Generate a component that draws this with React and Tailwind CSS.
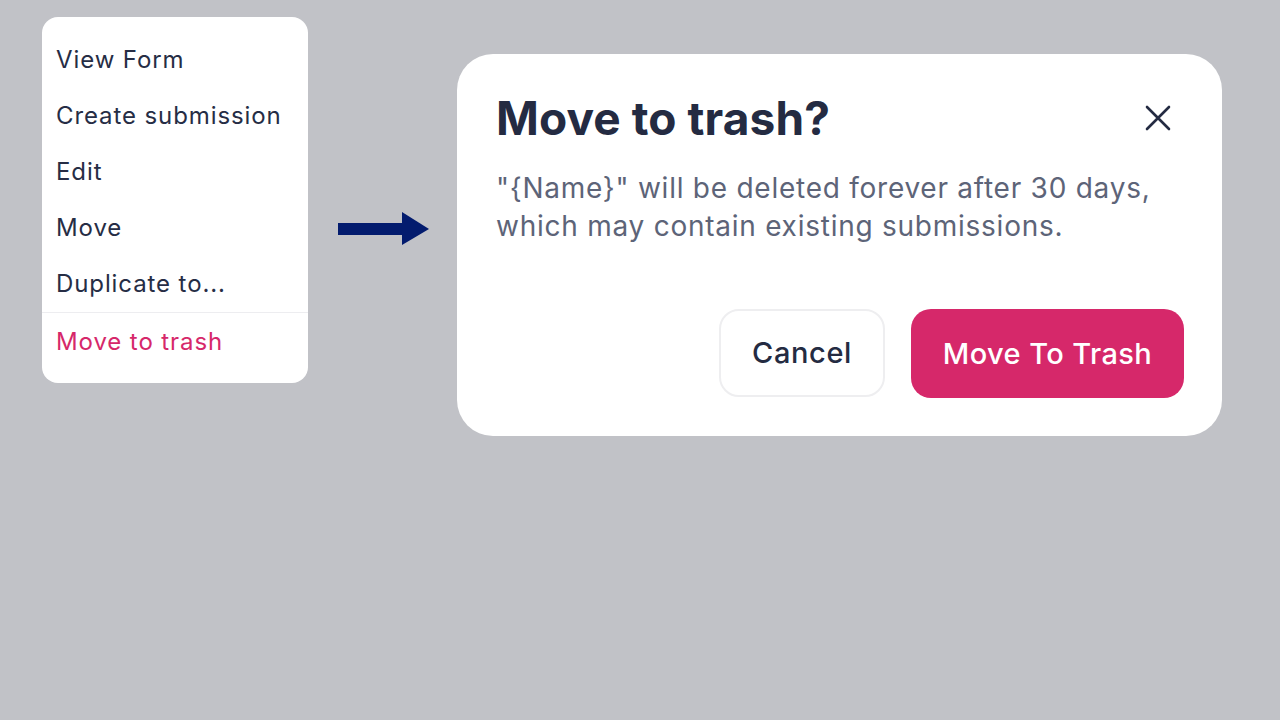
const menuItems = ['View Form', 'Create submission', 'Edit', 'Move', 'Duplicate to...'];

const ArrowRight = () => (
  <svg width="92" height="34" viewBox="0 0 92 34" className="shrink-0">
    <rect x="0" y="11" width="66" height="12" fill="#031b6e" />
    <polygon points="64,0 91,17 64,33" fill="#031b6e" />
  </svg>
);

const CloseIcon = () => (
  <svg width="26" height="26" viewBox="0 0 26 26" fill="none" stroke="#242b42" strokeWidth="2.6" strokeLinecap="round">
    <path d="M2 2l22 22M24 2L2 24" />
  </svg>
);

export default function App() {
  return (
    <div
      className="w-[1280px] h-[720px] bg-[#c1c2c7] flex items-start"
      style={{ fontFamily: 'Inter, "Open Sans", sans-serif' }}
    >
      {/* Context menu */}
      <div className="ml-[42px] mt-[17px] w-[266px] bg-white rounded-[16px] pt-[15px] pb-[13px]">
        {menuItems.map((item) => (
          <div key={item} className="px-[14px] h-[56px] flex items-center text-[24px] tracking-[0.9px] text-[#262d45]">
            {item}
          </div>
        ))}
        <div className="border-t border-[#ededf0] px-[14px] h-[58px] flex items-center text-[24px] tracking-[0.9px] text-[#d6286a]">
          Move to trash
        </div>
      </div>

      <div className="ml-[30px] mt-[212px]">
        <ArrowRight />
      </div>

      {/* Dialog */}
      <div className="ml-[27px] mt-[54px] w-[765px] h-[382px] bg-white rounded-[36px] pl-[39px] pr-[38px] pt-[28px]">
        <div className="flex items-center justify-between">
          <h1 className="text-[46px] font-bold tracking-[0.1px] text-[#242b42] leading-[72px]">Move to trash?</h1>
          <button className="mr-[13px]">
            <CloseIcon />
          </button>
        </div>
        <p className="mt-[15px] text-[28px] tracking-[0.75px] leading-[38px] text-[#5d6478]">
          "{'{'}Name{'}'}" will be deleted forever after 30 days,
          <br />
          which may contain existing submissions.
        </p>
        <div className="mt-[64px] flex justify-end gap-[26px]">
          <button className="w-[166px] h-[88px] rounded-[20px] border-2 border-[#eeeef0] bg-white text-[29px] tracking-[0.6px] text-[#242b42] font-medium">
            Cancel
          </button>
          <button className="w-[273px] h-[89px] rounded-[20px] bg-[#d6286a] text-[29px] tracking-[0.4px] text-white font-medium">
            Move To Trash
          </button>
        </div>
      </div>
    </div>
  );
}
